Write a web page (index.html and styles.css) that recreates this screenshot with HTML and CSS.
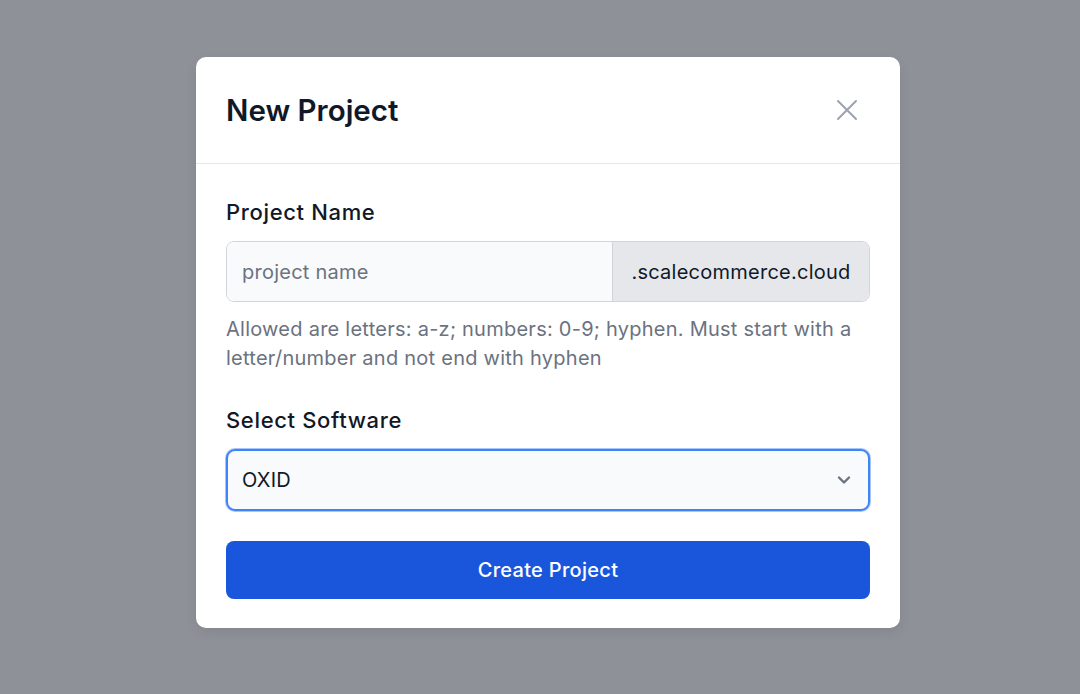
FILE: index.html
```html
<!DOCTYPE html>
<html>
<head>
<meta charset="utf-8">
<link rel="stylesheet" href="styles.css">
</head>
<body>
<div class="backdrop">
  <div class="modal">
    <div class="modal-header">
      <h3 class="title">New Project</h3>
      <button class="close" aria-label="Close">
        <svg width="22" height="22" viewBox="0 0 22 22" fill="none" stroke="#9ca3af" stroke-width="2" stroke-linecap="round"><path d="M2 2L20 20M20 2L2 20"/></svg>
      </button>
    </div>
    <div class="modal-body">
      <label class="label">Project Name</label>
      <div class="input-group">
        <input class="input" type="text" placeholder="project name">
        <span class="addon">.scalecommerce.cloud</span>
      </div>
      <p class="help">Allowed are letters: a-z; numbers: 0-9; hyphen. Must start with a letter/number and not end with hyphen</p>
      <label class="label">Select Software</label>
      <div class="select">
        <span>OXID</span>
        <svg width="16" height="16" viewBox="0 0 16 16" fill="none" stroke="#6b7280" stroke-width="2.4" stroke-linecap="round" stroke-linejoin="round"><path d="M3 5.5L8 10.5L13 5.5"/></svg>
      </div>
      <button class="btn">Create Project</button>
    </div>
  </div>
</div>
</body>
</html>
```
FILE: styles.css
```css
* { box-sizing: border-box; }
html, body { margin: 0; padding: 0; }
body {
  width: 1080px;
  height: 694px;
  background: #8e9198;
  font-family: Inter, "Noto Sans", sans-serif;
  overflow: hidden;
}
.backdrop {
  padding: 57px 0 0 196px;
}
.modal {
  width: 704px;
  background: #fff;
  border-radius: 10px;
  box-shadow: 0 4px 12px rgba(0,0,0,0.08);
}
.modal-header {
  height: 107px;
  display: flex;
  align-items: center;
  justify-content: space-between;
  padding: 0 30px;
  border-bottom: 1px solid #e5e7eb;
}
.title {
  margin: 0;
  font-size: 29.5px;
  font-weight: 600;
  color: #111827;
}
.close {
  background: none;
  border: 0;
  padding: 0;
  width: 40px;
  height: 40px;
  display: flex;
  align-items: center;
  justify-content: center;
  margin-right: 3px;
}
.modal-body {
  padding: 33px 30px 29px;
  display: flex;
  flex-direction: column;
}
.label {
  font-size: 22px;
  font-weight: 500;
  letter-spacing: 0.65px;
  color: #111827;
  line-height: 30px;
  margin-bottom: 14px;
}
.input-group {
  display: flex;
  height: 61px;
  border: 1px solid #d1d5db;
  border-radius: 8px;
  overflow: hidden;
}
.input {
  flex: 1;
  border: 0;
  background: #f9fafb;
  padding: 0 15px;
  font-family: inherit;
  font-size: 20px;
  letter-spacing: 0.25px;
  color: #111827;
  outline: none;
}
.input::placeholder { color: #6b7280; }
.addon {
  width: 257px;
  background: #e5e7eb;
  border-left: 1px solid #d1d5db;
  display: flex;
  align-items: center;
  justify-content: center;
  font-size: 20px;
  letter-spacing: 0.25px;
  color: #111827;
}
.help {
  margin: 13px 0 32px;
  font-size: 20px;
  letter-spacing: 0.25px;
  line-height: 29px;
  color: #6b7280;
}
.select {
  height: 62px;
  border: 2px solid #3f83f8;
  box-shadow: 0 0 0 1px rgba(63, 131, 248, 0.45);
  border-radius: 9px;
  background: #f9fafb;
  display: flex;
  align-items: center;
  justify-content: space-between;
  padding: 0 16px 0 14px;
  font-size: 20px;
  letter-spacing: 0.25px;
  color: #111827;
  margin-bottom: 30px;
}
.btn {
  height: 58px;
  border: 0;
  border-radius: 8px;
  background: #1a56db;
  color: #fff;
  font-family: inherit;
  font-size: 20px;
  letter-spacing: 0.3px;
  font-weight: 500;
}
```
